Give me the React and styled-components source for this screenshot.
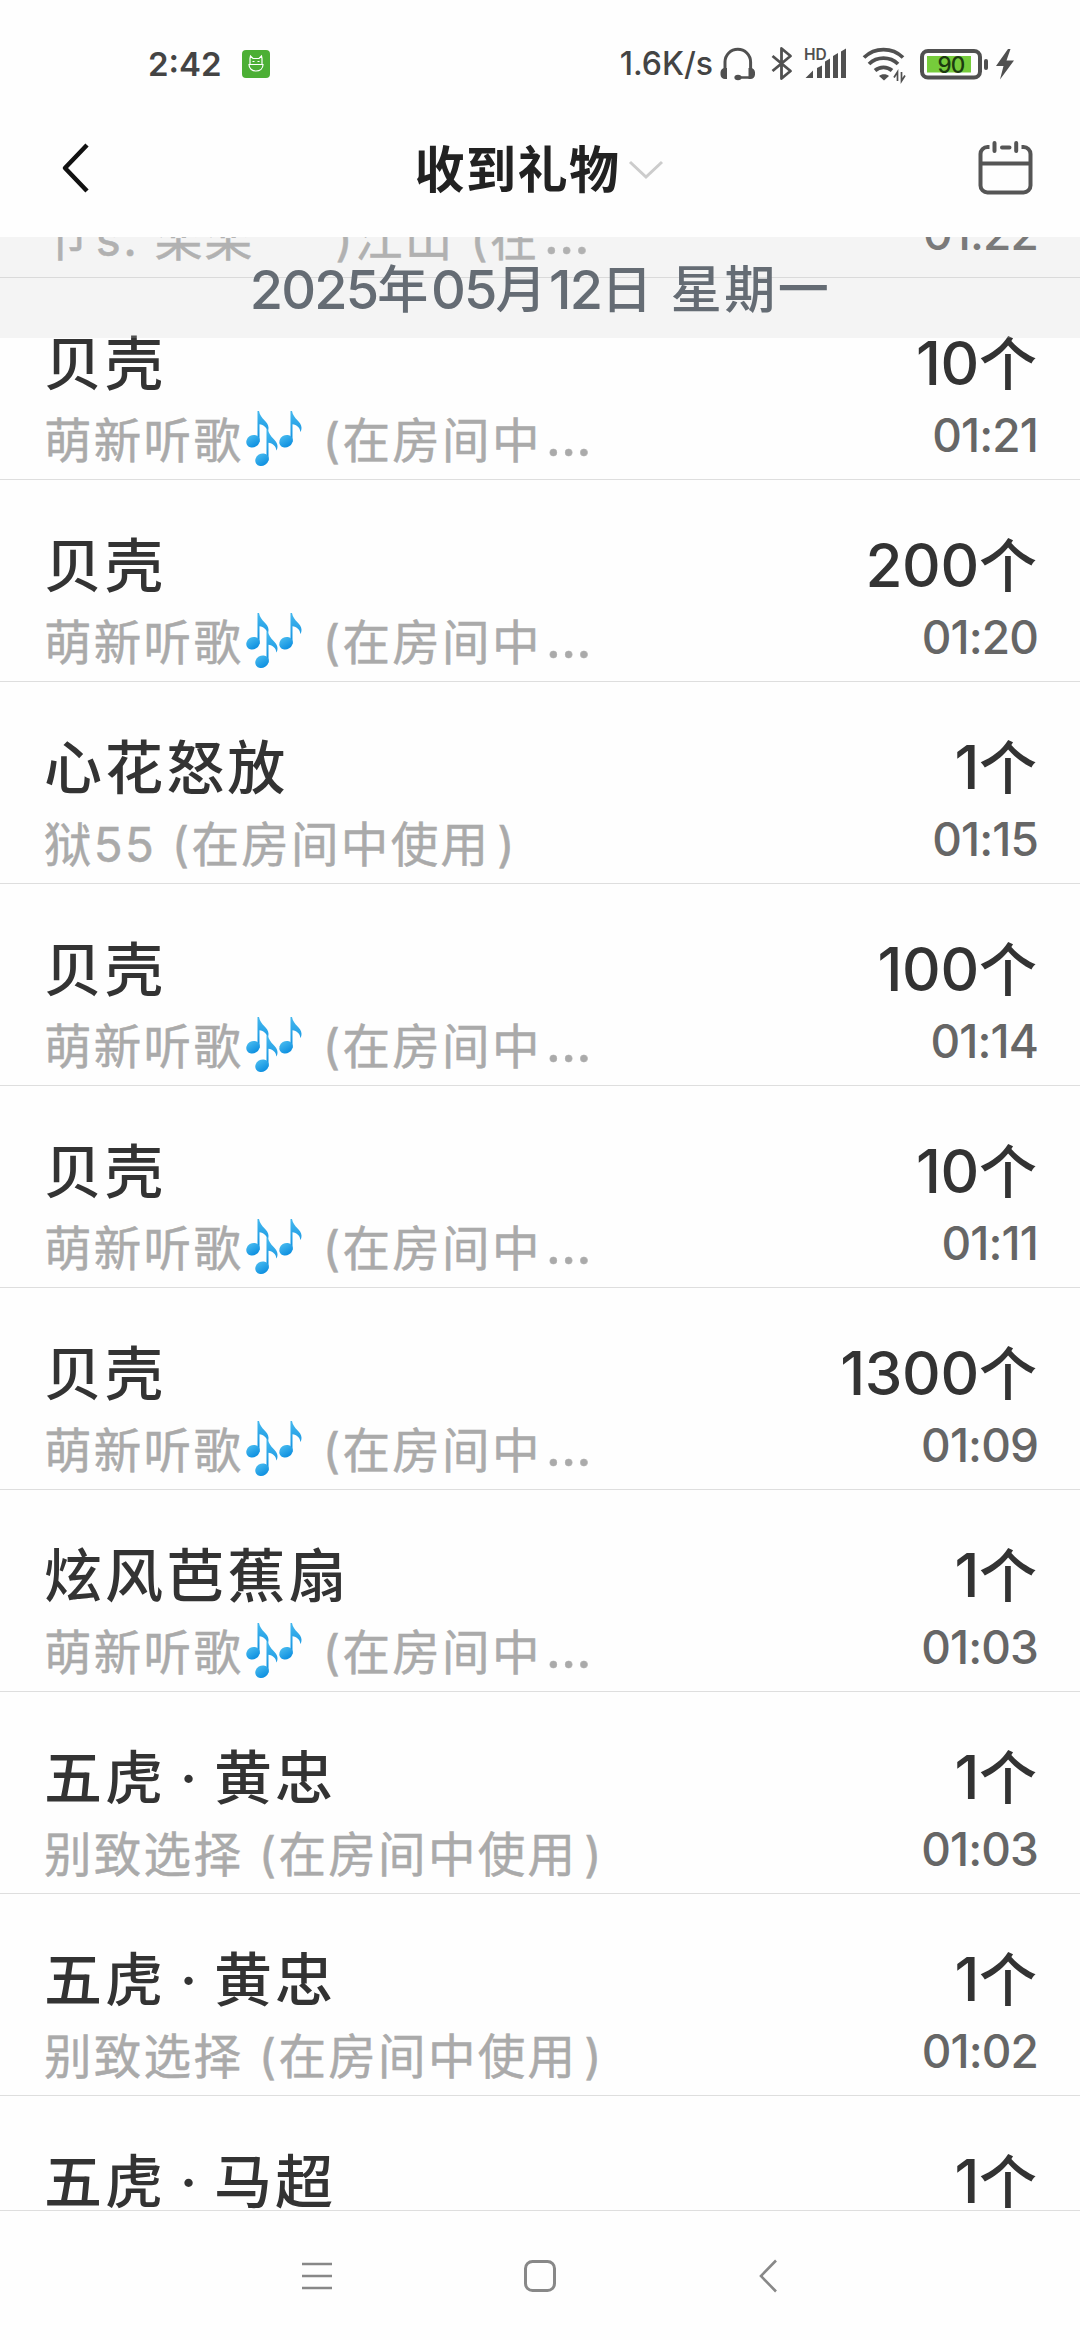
import React from 'react';
import styled, { createGlobalStyle } from 'styled-components';

const GlobalStyle = createGlobalStyle`
  * { box-sizing: border-box; }
  body { margin: 0; background: #fefefe; }
`;

const SANS = `Inter, "Noto Sans CJK SC", "Noto Sans", sans-serif`;

const Screen = styled.main`
  display: flex;
  flex-direction: column;
  width: 1080px;
  height: 2340px;
  overflow: hidden;
  background: #fefefe;
  font-family: ${SANS};
  color: #333;
`;

const StatusBar = styled.div`
  display: flex;
  align-items: center;
  justify-content: space-between;
  height: 100px;
  padding: 28px 56px 0 148px;
  color: #444;
`;

const StatusGroup = styled.div`
  display: flex;
  align-items: center;
  gap: ${(p) => p.$gap || 0}px;
`;

const Clock = styled.span`
  font-size: 33px;
  font-weight: 600;
  line-height: 40px;
`;

const Speed = styled.span`
  font-size: 32px;
  font-weight: 500;
  line-height: 40px;
`;

const AppBadge = styled.span`
  display: flex;
  align-items: center;
  justify-content: center;
  width: 28px;
  height: 28px;
  border-radius: 4px;
  background: #4caf35;
`;

const Header = styled.header`
  display: grid;
  grid-template-columns: 120px 1fr 120px;
  align-items: center;
  height: 137px;
`;

const HeaderAction = styled.button`
  display: flex;
  justify-content: ${(p) => (p.$end ? 'flex-end' : 'flex-start')};
  border: 0;
  background: none;
  padding: 0 ${(p) => (p.$end ? 46 : 0)}px 2px ${(p) => (p.$end ? 0 : 60)}px;
`;

const Title = styled.h1`
  display: flex;
  align-items: center;
  justify-content: center;
  gap: 7px;
  margin: 0;
  padding: 3px 2px 0 0;
  font-size: 50px;
  font-weight: 700;
  letter-spacing: 1.5px;
  line-height: 60px;
  color: #222;
`;

const ListViewport = styled.section`
  position: relative;
  height: 1973px;
  overflow: hidden;
`;

const DateBar = styled.div`
  position: absolute;
  inset: 0 0 auto 0;
  display: flex;
  align-items: center;
  justify-content: center;
  height: 101px;
  padding: 4px 0 0 1px;
  background: rgba(204, 204, 204, 0.2);
  color: #656c74;
  font-size: 51px;
  font-weight: 500;
  letter-spacing: 2.5px;
  line-height: 60px;
  white-space: pre;
`;

const Rows = styled.ul`
  list-style: none;
  margin: -161px 0 0;
  padding: 0;
`;

const Row = styled.li`
  display: grid;
  grid-template-columns: 560px 1fr;
  grid-template-rows: 71px 70px;
  align-content: start;
  height: 202px;
  padding: 51px 43px 0 44px;
  border-bottom: 1px solid #dedede;
`;

const Name = styled.span`
  font-size: 58px;
  font-weight: 500;
  letter-spacing: 3.1px;
  word-spacing: -5px;
  line-height: 70px;
  white-space: pre;
`;

const Count = styled.span`
  justify-self: end;
  font-size: 58px;
  font-weight: 500;
  line-height: 69px;
  white-space: nowrap;
`;

const Digits = styled.span`
  font-size: ${(p) => p.$size}px;
  letter-spacing: ${(p) => p.$spacing || 0}px;
`;

const Sender = styled.span`
  display: flex;
  align-items: center;
  height: 72px;
  padding-top: 9px;
  font-size: 47.5px;
  letter-spacing: 2.3px;
  line-height: 60px;
  color: #aaa;
  -webkit-text-stroke: 0.5px #aaa;
  white-space: pre;
`;

const Ellipsis = styled.span`
  margin-left: 4px;
  padding-bottom: 8px;
  font-size: 53px;
  line-height: 60px;
`;

const CloseParen = styled.span`
  margin-left: 7px;
`;

const Time = styled.span`
  justify-self: end;
  margin-right: -1px;
  font-size: 46px;
  font-weight: 500;
  letter-spacing: -0.9px;
  line-height: 70px;
  color: #666;
`;

const NavBar = styled.nav`
  display: grid;
  grid-template-columns: 222px 235px auto;
  align-items: center;
  flex: 1;
  border-top: 1px solid #dedede;
  padding: 0 0 0 302px;
`;

const NotesIcon = () => (
  <svg width="64" height="60" viewBox="0 0 64 60">
    <defs>
      <linearGradient id="note" x1="0" y1="0" x2="0" y2="1">
        <stop offset="0" stopColor="#45b8ee" />
        <stop offset="1" stopColor="#0d8fe0" />
      </linearGradient>
      <g id="quaver">
        <path d="M11 0h1.500C13.700 8 22 10.500 22 16.500c0 2.500-.4 3.500-1.200 4.500C20.800 16.500 17 13.800 13 13.200V31h-2z" />
        <ellipse cx="6.500" cy="30.200" rx="7" ry="6" transform="rotate(-32 6.500 30.200)" />
      </g>
    </defs>
    <g fill="url(#note)">
      <use href="#quaver" x="3.500" y="0" />
      <use href="#quaver" x="36.500" y="0" />
      <use href="#quaver" x="12.500" y="18.500" />
    </g>
  </svg>
);

const rows = [
  { name: '贝壳', count: 1, time: '01:22', parts: ['卩s. 栾栾', ')江山 (在'] },
  { name: '贝壳', count: 10, time: '01:21', notes: true },
  { name: '贝壳', count: 200, time: '01:20', notes: true },
  { name: '心花怒放', count: 1, time: '01:15', sender: '狱55' },
  { name: '贝壳', count: 100, time: '01:14', notes: true },
  { name: '贝壳', count: 10, time: '01:11', notes: true },
  { name: '贝壳', count: 1300, time: '01:09', notes: true },
  { name: '炫风芭蕉扇', count: 1, time: '01:03', notes: true },
  { name: '五虎 · 黄忠', count: 1, time: '01:03', sender: '别致选择' },
  { name: '五虎 · 黄忠', count: 1, time: '01:02', sender: '别致选择' },
  { name: '五虎 · 马超', count: 1, time: '01:02', sender: '别致选择' },
];

const Gap = styled.span`
  width: ${(p) => p.$w}px;
`;

function SenderLine({ row }) {
  if (row.notes) {
    return (
      <Sender>
        萌新听歌
        <NotesIcon />
        {' (在房间中'}
        <Ellipsis>…</Ellipsis>
      </Sender>
    );
  }
  if (row.parts) {
    return (
      <Sender>
        <Gap $w={2} />
        {row.parts[0]}
        <Gap $w={81} />
        {row.parts[1]}
        <Ellipsis>…</Ellipsis>
      </Sender>
    );
  }
  return (
    <Sender>
      {`${row.sender} (在房间中使用`}
      <CloseParen>)</CloseParen>
    </Sender>
  );
}

export default function App() {
  return (
    <Screen>
      <GlobalStyle />
      <StatusBar>
        <StatusGroup $gap={20}>
          <Clock>2:42</Clock>
          <AppBadge>
            <svg width="18" height="20" viewBox="0 0 18 20" fill="none" stroke="#fff" strokeWidth="1.200">
              <path d="M3 10V4.500L3.500 2l2.500 2.500h6L14.500 2l.5 2.500V10" />
              <path d="M2 10.500h14c0 4-3 6.500-7 6.500s-7-2.500-7-6.500z" />
              <path d="M5.500 7.500h2M10.500 7.500h2" />
            </svg>
          </AppBadge>
        </StatusGroup>
        <StatusGroup $gap={6}>
          <Speed>1.6K/s</Speed>
          <svg width="305" height="40" viewBox="0 0 305 40" fill="none" stroke="#505050">
            <path d="M6 28V18a12.800 12.800 0 0 1 25.600 0V28" strokeWidth="3" />
            <path d="M31 33.500H19" strokeWidth="2.500" />
            <path d="M8 24v11H6a4.500 4.500 0 0 1-4.500-4.500v-2A4.500 4.500 0 0 1 6 24zM29.500 24v11h2a4.500 4.500 0 0 0 4.500-4.500v-2A4.500 4.500 0 0 0 31.500 24z" fill="#505050" stroke="none" />
            <ellipse cx="19" cy="33.500" rx="3.600" ry="2.800" fill="#505050" stroke="none" />
            <path d="M53.500 12l18 15-9 7.500V4.500l9 7.500-18 15" strokeWidth="2.800" strokeLinejoin="round" />
            <g fill="#505050" stroke="none">
              <path d="M86.500 34h7.500v-7.500zM98 24l5-2.500V34h-5zM106 17.500l5-3V34h-5zM114 12l5-3v25h-5zM122 7.500l5-3V34h-5z" />
            </g>
            <g strokeWidth="3.800">
              <path d="M145 13.500a28 28 0 0 1 39 0" />
              <path d="M150 20a21 21 0 0 1 29 0" />
              <path d="M156 26.500a13 13 0 0 1 17 0" />
            </g>
            <path d="M160 32c2.500-2.500 7.500-2.500 10 0l-5 4.500z" fill="#505050" stroke="none" />
            <path d="M178.500 37v-9l-3.500 5.500M182.500 28v9l3.500-5.500" strokeWidth="1.700" />
            <rect x="203" y="7" width="58" height="26.500" rx="6" strokeWidth="4" />
            <rect x="208" y="12" width="44" height="16.500" fill="#76cc3b" stroke="none" />
            <path d="M267 17v7" strokeWidth="4" strokeLinecap="round" />
            <path d="M289 5l-12 17h7.500l-3.500 13.500 14-19h-7.500L291.500 5z" fill="#505050" stroke="none" />
            <text x="85" y="15.500" fontFamily="Inter, sans-serif" fontSize="15.500" fontWeight="600" fill="#505050" stroke="none">HD</text>
            <text x="218.500" y="28.500" fontFamily="Inter, sans-serif" fontSize="22.500" fontWeight="500" letterSpacing="-1" fill="#1c3a10" stroke="none">90</text>
          </svg>
        </StatusGroup>
      </StatusBar>

      <Header>
        <HeaderAction aria-label="back">
          <svg width="30" height="50" viewBox="0 0 30 50" fill="none" stroke="#111" strokeWidth="4.500" strokeLinejoin="round">
            <path d="M27 2L5 25l22 23" />
          </svg>
        </HeaderAction>
        <Title>
          收到礼物
          <svg width="36" height="20" viewBox="0 0 36 20" fill="none" stroke="#ccc" strokeWidth="3">
            <path d="M2 2l16 15L34 2" />
          </svg>
        </Title>
        <HeaderAction $end aria-label="calendar">
          <svg width="56" height="56" viewBox="0 0 56 56" fill="none" stroke="#555" strokeWidth="4">
            <path d="M11.500 7H9.500a7 7 0 0 0-7 7v31.500a7 7 0 0 0 7 7h36a7 7 0 0 0 7-7V14a7 7 0 0 0-7-7h-2M2.500 23.500h50" />
            <path d="M24 7.500h7.500M16.500 3v8M38.200 3v8" strokeLinecap="round" />
          </svg>
        </HeaderAction>
      </Header>

      <ListViewport>
        <Rows>
          {rows.map((row, i) => (
            <Row key={i}>
              <Name>{row.name}</Name>
              <Count>
                <Digits $size={60} $spacing={-0.3}>{row.count}</Digits>个
              </Count>
              <SenderLine row={row} />
              <Time>{row.time}</Time>
            </Row>
          ))}
        </Rows>
        <DateBar>
          <Digits $size={54} $spacing={-1.8}>2025</Digits>年<Digits $size={54} $spacing={-1.8}>05</Digits>月<Digits $size={54} $spacing={-1.8}>12</Digits>日 星期一
        </DateBar>
      </ListViewport>

      <NavBar>
        <svg width="30" height="30" viewBox="0 0 30 30" stroke="#888" strokeWidth="2.600">
          <path d="M0 3h30M0 15h30M0 27h30" />
        </svg>
        <svg width="32" height="32" viewBox="0 0 32 32" fill="none" stroke="#888" strokeWidth="3">
          <rect x="1.500" y="1.500" width="29" height="29" rx="7" />
        </svg>
        <svg width="18" height="34" viewBox="0 0 18 34" fill="none" stroke="#888" strokeWidth="2.600">
          <path d="M17 1.500L2 17l15 15.500" />
        </svg>
      </NavBar>
    </Screen>
  );
}
